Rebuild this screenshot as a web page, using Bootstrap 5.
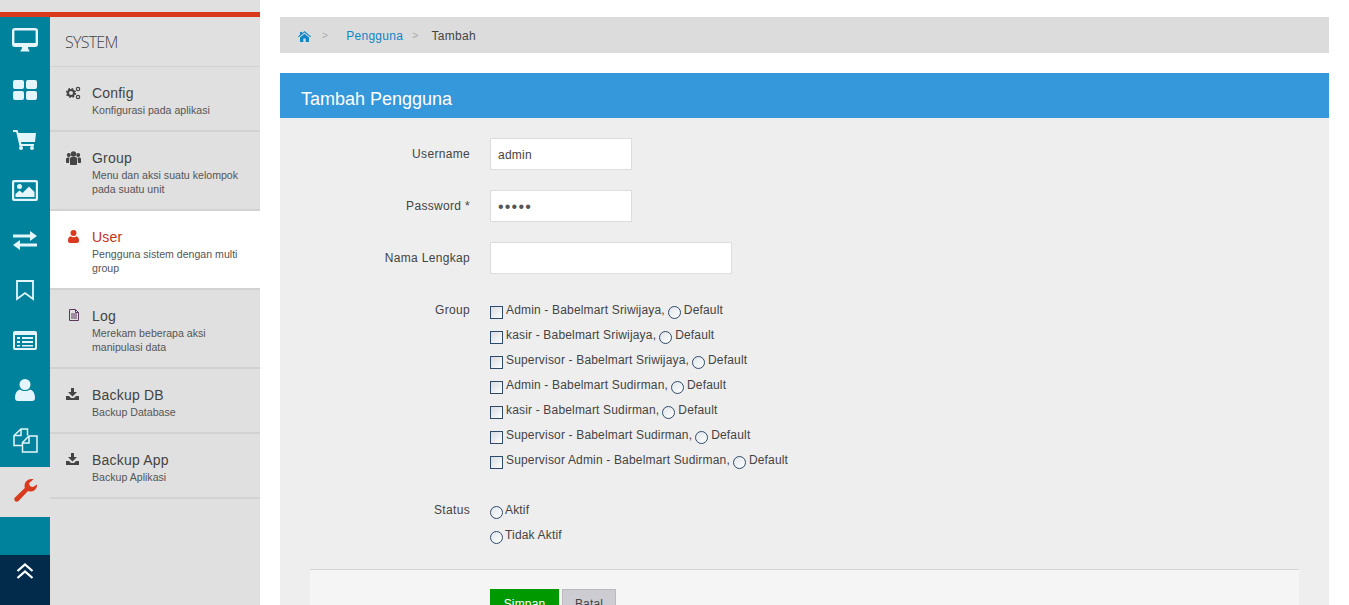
<!DOCTYPE html>
<html lang="id">
<head>
<meta charset="utf-8">
<title>Tambah Pengguna</title>
<link href="https://cdn.jsdelivr.net/npm/bootstrap@5.3.0/dist/css/bootstrap.min.css" rel="stylesheet">
<style>
html,body{height:605px;overflow:hidden;background:#fff}
body{font-family:"Liberation Sans",Arial,sans-serif;font-size:12px;color:#444;letter-spacing:.17px}
.app-shell{width:1349px;height:605px}
.side-wrap{width:260px;height:605px;background:#e0e0e0;padding-top:12px;flex:none}
.side-inner{border-top:5px solid #d9391c;height:593px}
.rail{width:50px;background:#00829c;flex:none}
.rail-item{height:50px;color:#e4f6fb;padding-bottom:4px}
.rail-item svg{display:block}
.rail-active{background:#e0e0e0;color:#d9391c}
.rail-gap{height:38px}
.rail-up{background:#022a4a;flex:1}
.sub-head{box-sizing:content-box;border-bottom:1px solid #d2d2d2;padding:15px 0 0 15px;height:34px;font-family:"Open Sans",sans-serif;font-weight:300;font-size:16px;line-height:20px;color:#444;letter-spacing:-.75px}
.sub-item{border-bottom:2px solid #d2d2d2;padding:17px 10px 0 42px;position:relative;color:#555}
.sub-item b{display:block;font-weight:400;font-size:14px;line-height:18px;color:#444;letter-spacing:.2px}
.sub-item span{display:block;font-size:10.6px;line-height:14px;margin-top:1px;color:#555;letter-spacing:0}
.sub-ic{position:absolute;left:16px;top:19px;color:#444}
.h-a{height:65px}.h-b{height:79px}
.sub-on{background:#fff}
.sub-on b{color:#c0321c}
.sub-on .sub-ic{color:#d9391c}
.main-col{width:1049px;margin-left:20px;padding-top:17px;flex:none}
.crumb-bar{height:36px;background:#dcdcdc;padding:2px 18px 0;line-height:34px;font-size:12px;margin:0;color:#444;letter-spacing:.3px}
.crumb-bar a{color:#0f86c6;text-decoration:none}
.crumb-sep{color:#aaa;margin:0 13px 0 9px;font-size:10px}
.crumb-sep-a{margin:0 18px 0 11px}
.panel-head{margin-top:20px;height:45px;background:#3498db;color:#fff;padding:15px 21px 0;font-size:18px;line-height:22px;font-weight:400;letter-spacing:0;margin-bottom:0}
.panel-body{background:#eee;height:487px;padding-top:20px}
.frm-row{display:flex;margin-bottom:20px}
.frm-row-name{margin-bottom:32px}
.frm-row-group{margin-bottom:25px}
.frm-row-status{margin-bottom:13px}
.frm-lbl{width:190px;text-align:right;padding-top:9px;line-height:14px;flex:none;color:#444;margin:0;letter-spacing:.32px}
.frm-lbl-top{padding-top:0;margin-top:-3px}
.frm-box{margin-left:20px}
.fld{height:32px;border:1px solid #ddd;border-radius:0;background:#fff;padding:2px 7px 0;font-size:12px;color:#444;letter-spacing:.25px;box-shadow:none}
.fld-s{width:142px}.fld-l{width:242px}
.dots{letter-spacing:1.200px;font-size:16px;color:#555}
.chk-line{height:25px;line-height:14px;display:flex;align-items:flex-start;white-space:pre}
.chk-line span{margin-top:-3px}
.tick{appearance:none;-webkit-appearance:none;width:13px;height:13px;margin:0 3px 0 0;border:1px solid #2e4a6a;background:linear-gradient(135deg,#d8dde2,#fdfdfd);flex:none;border-radius:0}
.rnd{border-radius:50%;margin:0 3px 0 3px;background:linear-gradient(135deg,#e0e6ea,#fff)}
.rnd-first{margin:0 2px 0 0}
.act-bar{margin:0 30px;border-top:1px solid #d5d5d5;background:#f5f5f5;height:60px;padding:19px 0 0 180px;gap:3px}
.btn-go,.btn-no{height:32px;border-radius:0;font-size:12px;padding:0 0 2px;letter-spacing:.17px}
.btn-go{width:69px;background:#090;border:1px solid #090;color:#fff}
.btn-no{width:54px;background:#ccccd2;border:1px solid #bbb;color:#444}
</style>
</head>
<body>
<div class="app-shell d-flex">
  <aside class="side-wrap">
    <div class="side-inner d-flex">
      <nav class="rail d-flex flex-column">
        <div class="rail-item d-flex justify-content-center align-items-center"><svg width="26" height="24" viewBox="0 0 26 24"><path fill="currentColor" fill-rule="evenodd" d="M3 0h20a3 3 0 0 1 3 3v13a3 3 0 0 1-3 3h-7c0 2 .6 3 1.500 3.500v.9h-9v-.9c.9-.5 1.500-1.500 1.500-3.500H3a3 3 0 0 1-3-3V3a3 3 0 0 1 3-3zm-.6 2.400v12.600h21.200V2.400z"/></svg></div>
        <div class="rail-item d-flex justify-content-center align-items-center"><svg width="24" height="20" viewBox="0 0 24 20"><g fill="currentColor"><rect width="11" height="9" rx="2"/><rect x="13" width="11" height="9" rx="2"/><rect y="11" width="11" height="9" rx="2"/><rect x="13" y="11" width="11" height="9" rx="2"/></g></svg></div>
        <div class="rail-item d-flex justify-content-center align-items-center"><svg width="24" height="20" viewBox="0 0 24 20"><path fill="currentColor" d="M0 0h4.500l1 3H23l-1 9H8l.4 2H21v2H6.500L3.200 2H0z"/><circle cx="8" cy="18" r="2" fill="currentColor"/><circle cx="19" cy="18" r="2" fill="currentColor"/></svg></div>
        <div class="rail-item d-flex justify-content-center align-items-center"><svg width="26" height="21" viewBox="0 0 26 21"><path fill="currentColor" fill-rule="evenodd" d="M2 0h22a2 2 0 0 1 2 2v17a2 2 0 0 1-2 2H2a2 2 0 0 1-2-2V2a2 2 0 0 1 2-2zm.2 2.200v16.600h21.600V2.200z"/><circle cx="7.500" cy="6.500" r="2.500" fill="currentColor"/><path fill="currentColor" d="M3.500 17v-3l4-3.500 3 2.500 6.500-6.500 5.500 5.500V17z"/></svg></div>
        <div class="rail-item d-flex justify-content-center align-items-center"><svg width="24" height="19" viewBox="0 0 24 19"><path fill="currentColor" d="M0 3.500h17V0l7 5-7 5V6.500H0zM24 12.500H7V9l-7 5 7 5v-3.500h17z"/></svg></div>
        <div class="rail-item d-flex justify-content-center align-items-center"><svg width="18" height="21" viewBox="0 0 18 21"><path fill="none" stroke="currentColor" stroke-width="1.800" d="M1 1h16v18l-8-6-8 6z"/></svg></div>
        <div class="rail-item d-flex justify-content-center align-items-center"><svg width="24" height="19" viewBox="0 0 24 19"><path fill="currentColor" fill-rule="evenodd" d="M2 0h20a2 2 0 0 1 2 2v15a2 2 0 0 1-2 2H2a2 2 0 0 1-2-2V2a2 2 0 0 1 2-2zm0 4v13h20V4z"/><path fill="currentColor" d="M4 6h3v2H4zm5 0h11v2H9zM4 10h3v2H4zm5 0h11v2H9zM4 14h3v1.500H4zm5 0h11v1.500H9z"/></svg></div>
        <div class="rail-item d-flex justify-content-center align-items-center"><svg width="20" height="22" viewBox="0 0 20 22"><circle cx="10" cy="5.500" r="5.500" fill="currentColor"/><path fill="currentColor" d="M0 19c0-5 2-7.500 5-8.500 3 2 7 2 10 0 3 1 5 3.500 5 8.500 0 2-1 3-3 3H3c-2 0-3-1-3-3z"/></svg></div>
        <div class="rail-item d-flex justify-content-center align-items-center"><svg width="25" height="25" viewBox="0 0 25 25"><path fill="none" stroke="currentColor" stroke-width="1.500" d="M9 17.500H1V7.500L8 1h6.500v6.500M8 1v6.500H1M9.500 24V14.500L16 8h8v16zM16 8v7H9.500"/></svg></div>
        <div class="rail-item rail-active d-flex justify-content-center align-items-center"><svg width="23" height="23" viewBox="0 0 23 23"><path fill="currentColor" d="M23 5.500c.3 3.500-2.500 7.500-7 7-1 0-1.500-.2-2-.4L4.500 22c-1 1-2.500 1-3.500 0s-1-2.500 0-3.500L10.800 9C10 6 11 3 13.500 1.300 15.500 0 17.500-.2 19.500.3l-4.500 4 1 3 3 .8z"/></svg></div>
        <div class="rail-gap"></div>
        <div class="rail-up d-flex justify-content-center"><svg class="mt-2" width="18" height="16" viewBox="0 0 18 16"><path fill="none" stroke="#fff" stroke-width="2.300" d="M1.500 8L9 1.500 16.500 8M1.500 15L9 8.500 16.500 15"/></svg></div>
      </nav>
      <div class="flex-grow-1">
        <div class="sub-head">SYSTEM</div>
        <div class="sub-item h-a">
          <svg class="sub-ic" width="15" height="14" viewBox="0 0 15 14"><g fill="none" stroke="currentColor"><circle cx="5" cy="7" r="3" stroke-width="2"/><circle cx="5" cy="7" r="4.300" stroke-width="1.600" stroke-dasharray="1.700 1.700"/><circle cx="12" cy="3" r="1.700" stroke-width="1.200"/><circle cx="12" cy="11" r="1.700" stroke-width="1.200"/></g></svg>
          <b>Config</b><span>Konfigurasi pada aplikasi</span>
        </div>
        <div class="sub-item h-b">
          <svg class="sub-ic" width="15" height="14" viewBox="0 0 15 14"><g fill="currentColor"><circle cx="2.800" cy="4" r="2"/><circle cx="12.200" cy="4" r="2"/><circle cx="7.500" cy="3" r="2.700"/><path d="M0 11V8c0-1 1-1.500 2-1.500h1.500L3 12H1c-.7 0-1-.4-1-1zM15 11V8c0-1-1-1.500-2-1.500h-1.500L12 12h2c.7 0 1-.4 1-1zM4 8c0-1.500 1-2 2-2h3c1 0 2 .5 2 2v5c0 .6-.4 1-1 1H5c-.6 0-1-.4-1-1z"/></g></svg>
          <b>Group</b><span>Menu dan aksi suatu kelompok pada suatu unit</span>
        </div>
        <div class="sub-item h-b sub-on">
          <svg class="sub-ic" style="left:18px" width="11" height="13" viewBox="0 0 11 13"><circle cx="5.500" cy="3" r="3" fill="currentColor"/><path fill="currentColor" d="M0 10.500C0 8 1 7 2.500 6.300c2 1.300 4 1.300 6 0C10 7 11 8 11 10.500c0 1.500-.6 2.500-2 2.500H2c-1.400 0-2-1-2-2.500z"/></svg>
          <b>User</b><span>Pengguna sistem dengan multi group</span>
        </div>
        <div class="sub-item h-b">
          <svg class="sub-ic" style="left:19px;color:#5b3a5e" width="10" height="12" viewBox="0 0 10 12"><path fill="none" stroke="currentColor" d="M.5.500h6l3 3v8h-9zM2 5h6M2 7h6M2 9h6M6.500.500v3h3"/></svg>
          <b>Log</b><span>Merekam beberapa aksi manipulasi data</span>
        </div>
        <div class="sub-item h-a">
          <svg class="sub-ic" width="13" height="12" viewBox="0 0 13 12"><path fill="currentColor" d="M5 0h3v4h3L6.500 8.500 2 4h3zM0 8h3l2 2h3l2-2h3v4H0z"/></svg>
          <b>Backup DB</b><span>Backup Database</span>
        </div>
        <div class="sub-item h-a">
          <svg class="sub-ic" width="13" height="12" viewBox="0 0 13 12"><path fill="currentColor" d="M5 0h3v4h3L6.500 8.500 2 4h3zM0 8h3l2 2h3l2-2h3v4H0z"/></svg>
          <b>Backup App</b><span>Backup Aplikasi</span>
        </div>
      </div>
    </div>
  </aside>
  <main class="main-col">
    <div class="crumb-bar d-flex align-items-center">
      <a href="#" class="d-flex"><svg width="13" height="11" viewBox="0 0 13 11"><path fill="currentColor" d="M6.500 0L13 5.500l-.7.8L6.500 1.500.7 6.300 0 5.500 2 3.800V1h2v1.200zM2 6.500l4.500-3.800L11 6.500V11H7.700V7.500H5.300V11H2z"/></svg></a>
      <span class="crumb-sep crumb-sep-a">&gt;</span>
      <a href="#">Pengguna</a>
      <span class="crumb-sep">&gt;</span>
      <span>Tambah</span>
    </div>
    <h1 class="panel-head">Tambah Pengguna</h1>
    <form class="panel-body">
      <div class="frm-row"><label class="frm-lbl">Username</label><div class="frm-box"><input class="form-control fld fld-s" value="admin"></div></div>
      <div class="frm-row"><label class="frm-lbl">Password *</label><div class="frm-box"><input type="password" class="form-control fld fld-s dots" value="admin"></div></div>
      <div class="frm-row frm-row-name"><label class="frm-lbl">Nama Lengkap</label><div class="frm-box"><input class="form-control fld fld-l"></div></div>
      <div class="frm-row frm-row-group"><label class="frm-lbl frm-lbl-top">Group</label>
        <div class="frm-box">
          <div class="chk-line"><input type="checkbox" class="tick"><span>Admin - Babelmart Sriwijaya,</span><input type="radio" class="tick rnd"><span>Default</span></div>
          <div class="chk-line"><input type="checkbox" class="tick"><span>kasir - Babelmart Sriwijaya,</span><input type="radio" class="tick rnd"><span>Default</span></div>
          <div class="chk-line"><input type="checkbox" class="tick"><span>Supervisor - Babelmart Sriwijaya,</span><input type="radio" class="tick rnd"><span>Default</span></div>
          <div class="chk-line"><input type="checkbox" class="tick"><span>Admin - Babelmart Sudirman,</span><input type="radio" class="tick rnd"><span>Default</span></div>
          <div class="chk-line"><input type="checkbox" class="tick"><span>kasir - Babelmart Sudirman,</span><input type="radio" class="tick rnd"><span>Default</span></div>
          <div class="chk-line"><input type="checkbox" class="tick"><span>Supervisor - Babelmart Sudirman,</span><input type="radio" class="tick rnd"><span>Default</span></div>
          <div class="chk-line"><input type="checkbox" class="tick"><span>Supervisor Admin - Babelmart Sudirman,</span><input type="radio" class="tick rnd"><span>Default</span></div>
        </div>
      </div>
      <div class="frm-row frm-row-status"><label class="frm-lbl frm-lbl-top">Status</label>
        <div class="frm-box">
          <div class="chk-line"><input type="radio" name="st" class="tick rnd rnd-first"><span>Aktif</span></div>
          <div class="chk-line"><input type="radio" name="st" class="tick rnd rnd-first"><span>Tidak Aktif</span></div>
        </div>
      </div>
      <div class="act-bar d-flex">
        <button type="button" class="btn btn-go">Simpan</button>
        <button type="button" class="btn btn-no">Batal</button>
      </div>
    </form>
  </main>
</div>
<script src="https://cdn.jsdelivr.net/npm/bootstrap@5.3.0/dist/js/bootstrap.bundle.min.js"></script>
</body>
</html>
